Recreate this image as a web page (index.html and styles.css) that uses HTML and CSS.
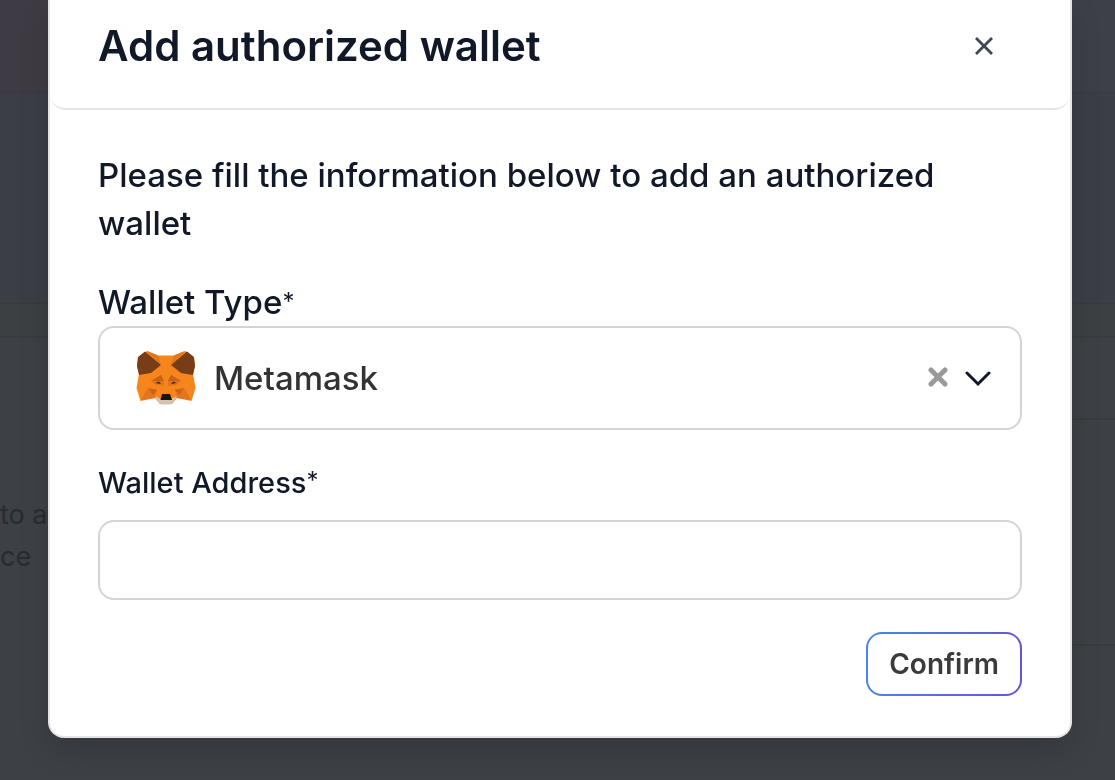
FILE: index.html
```html
<!DOCTYPE html>
<html lang="en">
<head>
    <meta charset="utf-8">
    <meta name="viewport" content="width=device-width, initial-scale=1">
    <title>Add authorized wallet</title>
    <link rel="stylesheet" href="styles.css">
</head>
<body>
    <div class="page">
        <div class="page-bar"></div>
        <div class="page-hero"></div>
        <div class="page-strip"></div>
        <div class="page-content">
            <p class="page-note">to a<br>ce</p>
            <div class="page-rows">
                <div class="page-row"></div>
                <div class="page-row page-row-tall"></div>
            </div>
        </div>
    </div>

    <div class="overlay">
        <form class="modal" role="dialog" aria-labelledby="modalTitle">
            <header class="modal-header">
                <h1 id="modalTitle">Add authorized wallet</h1>
                <button type="button" class="icon-button" aria-label="Close">
                    <svg width="20" height="20" viewBox="0 0 20 20" fill="none" stroke="#3f4753" stroke-width="2.8">
                        <path d="M2 2L18 18M18 2L2 18"/>
                    </svg>
                </button>
            </header>

            <div class="modal-body">
                <p class="intro">Please fill the information below to add an authorized wallet</p>

                <label class="label" for="walletType">Wallet Type<span class="star">*</span></label>
                <div class="select-box">
                    <svg width="60" height="56" viewBox="0 0 60 56">
                        <path fill="#f6851b" d="M11 1L22 5.5H38L49 1L58 8L59 16L57 24L59.500 38L55.500 51L41 48L36 54H24L19 48L4.500 51L.5 38L3 24L1 16L2 8Z"/>
                        <path fill="#e2761b" d="M11 1L22 5.500L25 15ZM49 1L38 5.500L35 15Z"/>
                        <path fill="#763d16" d="M9 1.500L25 15L15 23L3 25L1 16L2 7ZM51 1.500L35 15L45 23L57 25L59 16L58 7Z"/>
                        <path fill="#e4751f" d="M25 25L15 31L20 35L28 36V31ZM35 25L45 31L40 35L32 36V31ZM11 39L21 39L19 48L5 50ZM49 39L39 39L41 48L55 50Z"/>
                        <path fill="#cd6116" d="M25 25L15 31L28 31ZM35 25L45 31L32 31ZM12 38L21 40L17 45ZM48 38L39 40L43 45Z"/>
                        <path fill="#233447" d="M19 33L23 31.500L25 34ZM41 33L37 31.500L35 34Z"/>
                        <path fill="#d7c1b3" d="M19 46L25 49H35L41 46L38 52L34 54.500H26L22 52Z"/>
                        <path fill="#161616" d="M26 44H34L36 50H24.500Z"/>
                    </svg>
                    <select id="walletType">
                        <option>Metamask</option>
                    </select>
                    <button type="button" class="icon-button" aria-label="Clear wallet type">
                        <svg width="22" height="22" viewBox="0 0 22 22" fill="none" stroke="#999" stroke-width="5" stroke-linecap="round">
                            <path d="M4 3L18 17M18 3L4 17"/>
                        </svg>
                    </button>
                    <svg class="chevron" width="26" height="18" viewBox="0 0 26 18" fill="none" stroke="#111827" stroke-width="3" stroke-linecap="round">
                        <path d="M2 4L13 15L24 4"/>
                    </svg>
                </div>

                <label class="label label-small" for="walletAddress">Wallet Address<span class="star">*</span></label>
                <input class="text-box" type="text" id="walletAddress">

                <div class="actions">
                    <button type="submit" class="confirm">Confirm</button>
                </div>
            </div>
        </form>
    </div>
</body>
</html>
```
FILE: styles.css
```css
* {
    box-sizing: border-box;
}
body {
    margin: 0;
    font-family: Inter, "Open Sans", sans-serif;
    font-weight: 500;
    color: #111827;
    background: #3d4043;
}

/* dimmed page behind the dialog */
.page {
    display: flex;
    flex-direction: column;
    min-height: 100vh;
}
.page-bar {
    height: 93px;
    background: linear-gradient(90deg, #3e3b44, #3d4049);
    border-bottom: 1px solid #393b43;
}
.page-hero {
    height: 211px;
    background: linear-gradient(90deg, #3c3e46, #3b3e47);
    border-bottom: 1px solid #393b3e;
}
.page-strip {
    height: 34px;
    background: #3d4043;
    border-bottom: 2px solid #393b3e;
}
.page-content {
    display: flex;
    flex: 1;
    justify-content: space-between;
    background: #3d4045;
}
.page-note {
    margin: 156px 0 0;
    font-size: 27px;
    font-weight: 400;
    line-height: 42px;
    color: #272b32;
}
.page-rows {
    width: 48px;
}
.page-row {
    height: 82px;
    border-bottom: 2px solid #393b3e;
}
.page-row-tall {
    height: 226px;
}

.overlay {
    position: fixed;
    inset: 0;
    overflow: auto;
    padding: 0 43px 42px 48px;
}
.modal {
    background: #fff;
    border: 2px solid #e5e5e5;
    border-top: 0;
    border-radius: 0 0 16px 16px;
    box-shadow: 0 12px 30px rgba(0, 0, 0, 0.15);
}
.modal-header {
    display: flex;
    align-items: center;
    justify-content: space-between;
    padding: 16px 70px 32px 48px;
    border-bottom: 2px solid #e5e5e5;
    border-radius: 16px;
}
h1 {
    margin: 0;
    font-size: 42px;
    font-weight: 600;
    line-height: 60px;
}
.icon-button {
    display: flex;
    padding: 6px;
    border: 0;
    background: none;
    cursor: pointer;
}
.modal-body {
    padding: 41px 48px 40px;
}
.intro {
    margin: 0 0 32px;
    font-size: 33px;
    line-height: 48px;
}
.label {
    display: block;
    font-size: 33px;
    line-height: 47px;
}
.label-small {
    margin: 32px 0 16px;
    font-size: 29px;
    line-height: 42px;
}
.star {
    font-size: 24px;
    font-weight: 400;
    line-height: 1;
    vertical-align: 4px;
}
.select-box {
    display: flex;
    align-items: center;
    height: 104px;
    padding: 0 29px 0 36px;
    border: 2px solid #d4d4d6;
    border-radius: 16px;
}
.select-box select {
    flex: 1;
    min-width: 0;
    height: 60px;
    padding: 0 0 0 18px;
    border: 0;
    background: none;
    appearance: none;
    font: inherit;
    font-size: 33px;
    color: #333;
}
.chevron {
    margin-left: 10px;
    pointer-events: none;
}
.text-box {
    display: block;
    width: 100%;
    height: 80px;
    padding: 0 24px;
    border: 2px solid #d4d4d6;
    border-radius: 16px;
    font: inherit;
    font-size: 29px;
}
.actions {
    display: flex;
    justify-content: flex-end;
    margin-top: 32px;
}
.confirm {
    height: 64px;
    padding: 0 21px;
    border: 2px solid transparent;
    border-radius: 16px;
    background: linear-gradient(#fff, #fff) padding-box, linear-gradient(90deg, #4a86e8, #6457d0) border-box;
    font: inherit;
    font-size: 28px;
    font-weight: 600;
    color: #3b3b3d;
    cursor: pointer;
}
```
